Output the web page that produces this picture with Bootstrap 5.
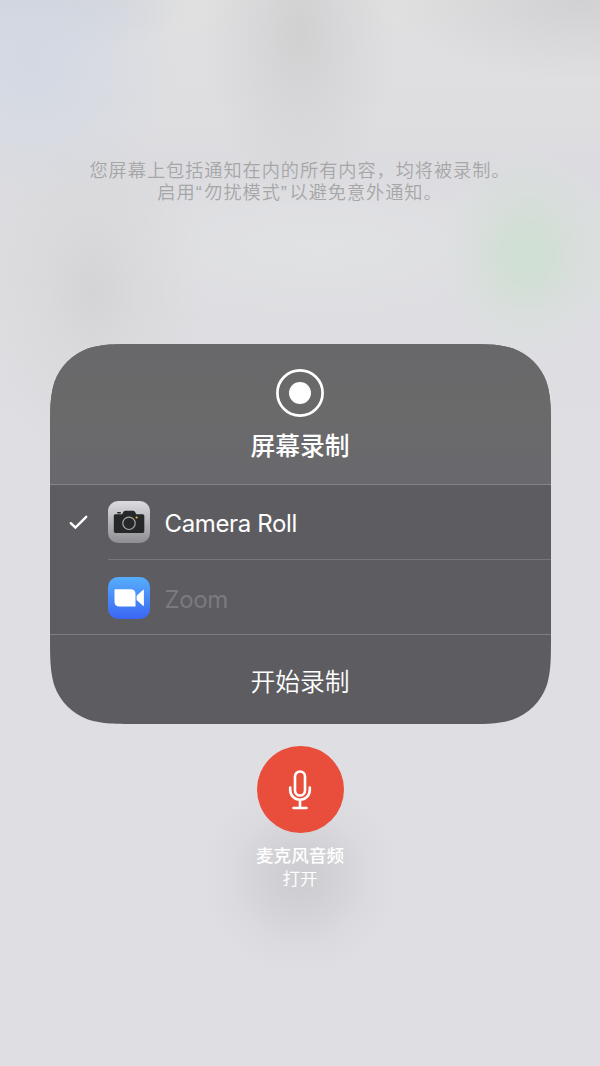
<!DOCTYPE html>
<html lang="zh-CN">
<head>
<meta charset="utf-8">
<meta name="viewport" content="width=device-width, initial-scale=1">
<title>屏幕录制</title>
<link rel="stylesheet" href="https://cdn.jsdelivr.net/npm/bootstrap@5.3.0/dist/css/bootstrap.min.css">
<style>
  html, body { height: 1066px; overflow: hidden; }
  body {
    font-family: Inter, "Noto Sans CJK SC", sans-serif;
    background:
      radial-gradient(ellipse 88px 105px at 527px 253px, #cfe0d2 0%, #d0dfd3d0 30%, #d5e0d880 60%, #dadfdc00 100%),
      radial-gradient(ellipse 95px 175px at 300px 32px, #d0d0d1 0%, #d3d3d5b0 40%, #dadadc00 100%),
      radial-gradient(ellipse 150px 140px at 30px 60px, #d3d8e3 0%, #d4d9e3b0 45%, #d8dbe300 100%),
      radial-gradient(ellipse 160px 60px at 30px 0, #c9cdd6 0%, #d0d3da00 100%),
      radial-gradient(ellipse 190px 80px at 580px 0, #d1d1d3 0%, #d8d8da00 100%),
      radial-gradient(ellipse 110px 170px at 92px 290px, #d4d4d6 0%, #d7d7d9a0 40%, #dcdcdf00 100%),
      radial-gradient(ellipse 260px 80px at 320px 245px, #e1e2e4 0%, #e0e0e300 100%),
      linear-gradient(#e0e0e1 0, #dedee1 120px, #dcdce0 165px, #dedee2 340px, #dfdee3 480px);
  }
  .notice { padding-top: 160px; height: 344px; font-family: "Liberation Sans", "Noto Sans CJK SC", sans-serif; font-size: 18.2px; letter-spacing: .95px; line-height: 22px; font-weight: 350; color: #a6a6a7; }
  .quote-mark { letter-spacing: 2.6px; }
  .panel {
    width: 501px; height: 380px; margin-left: 1px; background: #5d5c61; border: 0; border-radius: 0; color: #fff;
    clip-path: path("M91.7 0H409.3C435.7 0 448.9 0 463.1 4.5C478.6 10.1 490.9 22.4 496.5 37.9C501 52.1 501 65.3 501 91.7V288.3C501 314.7 501 327.9 496.5 342.1C490.9 357.6 478.6 369.9 463.1 375.5C448.9 380 435.7 380 409.3 380H91.7C65.3 380 52.1 380 37.9 375.5C22.4 369.9 10.1 357.6 4.5 342.1C0 327.9 0 314.7 0 288.3V91.7C0 65.3 0 52.1 4.5 37.9C10.1 22.4 22.4 10.1 37.9 4.5C52.1 0 65.3 0 91.7 0Z");
  }
  .panel-top { height: 141px; padding: 25px 1px 0 0; border-bottom: 1px solid #858488; background: linear-gradient(#68686a, #6a6a6b 50%, #69686d); }
  .panel-title { font-size: 24.8px; line-height: 30px; font-weight: 500; margin-top: 14px; }
  .target { height: 75px; font-size: 24px; padding-left: 19px; }
  .target.is-off { height: 74px; color: #7b7a7e; }
  .target.is-off .target-body { height: 74px; padding-top: 2px; border-bottom: 0; }
  .tick { width: 39px; }
  .target-body { height: 75px; border-bottom: 1px solid #77767a; gap: 14.5px; }
  .app-name { letter-spacing: -.35px; padding-top: 3px; }
  .start { height: 90px; border-top: 1px solid #7d7c80; font-size: 24.8px; font-weight: 350; color: #fff; padding: 12px 1px 6px 0; }
  .start:hover { color: #fff; }
  .mic-area { margin-top: 22px; color: #fff; line-height: 23px; }
  .mic-btn { width: 87px; height: 87px; background: #e94e3c; }
  .halo { background: radial-gradient(circle at 50% 130px, #cdcdd1 0, #cfcfd3 18px, #d5d4d9 45px, #dbdadf 68px, #dfdee300 98px); width: 220px; height: 240px; }
  .mic-label { font-size: 17.6px; font-weight: 500; margin-top: 11px; }
  .mic-state { font-size: 17.6px; font-weight: 350; }
</style>
</head>
<body class="m-0">
<main class="d-flex flex-column align-items-center">
  <p class="notice text-center mb-0">您屏幕上包括通知在内的所有内容，均将被录制。<br>启用<span class="quote-mark">“</span>勿扰模式<span class="quote-mark">”</span>以避免意外通知。</p>

  <section class="panel card">
    <div class="panel-top d-flex flex-column align-items-center">
      <svg width="48" height="48" viewBox="0 0 48 48"><circle cx="24" cy="24" r="22.600" fill="none" stroke="#fff" stroke-width="2.700"/><circle cx="24" cy="24" r="11" fill="#fff"/></svg>
      <h1 class="panel-title mb-0">屏幕录制</h1>
    </div>
    <div class="target d-flex align-items-center">
      <div class="tick d-flex"><svg width="20" height="16" viewBox="0 0 20 16"><path d="M1.800 8.200 6.400 12.600 17.200 1.800" fill="none" stroke="#fff" stroke-width="2.400" stroke-linecap="round"/></svg></div>
      <div class="target-body d-flex align-items-center flex-grow-1">
        <svg width="42" height="42" viewBox="0 0 42 42">
          <defs><linearGradient id="gray" x2="0" y2="1"><stop stop-color="#dcdbdf"/><stop offset="1" stop-color="#8f8e93"/></linearGradient></defs>
          <rect width="42" height="42" rx="10" fill="url(#gray)"/>
          <path d="M7 13.200H14l1.700-2.600q.5-.8 1.500-.8h8q1 0 1.500.8l1.700 2.600h6.400q1.500 0 1.500 1.500v15.600q0 1.700-1.500 1.700H7.300q-1.500 0-1.500-1.700V14.700q0-1.500 1.200-1.500z" fill="#262728"/>
          <rect x="9" y="11" width="4" height="1.500" rx=".7" fill="#262728"/>
          <circle cx="21" cy="22.300" r="6.200" fill="none" stroke="#a8a8aa" stroke-width="1.200"/>
          <circle cx="28.600" cy="16.500" r="1.100" fill="#f2c230"/>
        </svg>
        <span class="app-name">Camera Roll</span>
      </div>
    </div>
    <div class="target is-off d-flex align-items-center">
      <div class="tick"></div>
      <div class="target-body d-flex align-items-center flex-grow-1">
        <svg width="42" height="42" viewBox="0 0 42 42">
          <defs><linearGradient id="blue" x2="0" y2="1"><stop stop-color="#56aefb"/><stop offset="1" stop-color="#3a66f5"/></linearGradient></defs>
          <rect width="42" height="42" rx="10" fill="url(#blue)"/>
          <path d="M7.200 12.300H22.500q5 0 5 5V29.500H11.500q-5 0-5-5V13q0-.7.7-.7zM28.600 18.800 35 13.100q.9-.7.9.4v14.800q0 1.100-.9.400l-6.400-5.700z" fill="#fff"/>
        </svg>
        <span class="app-name">Zoom</span>
      </div>
    </div>
    <button class="start btn rounded-0 border-start-0 border-end-0 border-bottom-0">开始录制</button>
  </section>

  <section class="mic-area halo d-flex flex-column align-items-center">
    <div class="mic-btn rounded-circle d-flex align-items-center justify-content-center">
      <svg width="24" height="42" viewBox="0 0 24 42" fill="none" stroke="#fff" stroke-width="2.600" stroke-linecap="round"><rect x="7" y="2.500" width="10" height="24" rx="5"/><path d="M2.200 18.500V21a9.800 9.800 0 0 0 19.600 0V18.500M12 31v7.500M5.500 39h13"/></svg>
    </div>
    <div class="mic-label">麦克风音频</div>
    <div class="mic-state">打开</div>
  </section>
</main>
<script src="https://cdn.jsdelivr.net/npm/bootstrap@5.3.0/dist/js/bootstrap.bundle.min.js"></script>
</body>
</html>
